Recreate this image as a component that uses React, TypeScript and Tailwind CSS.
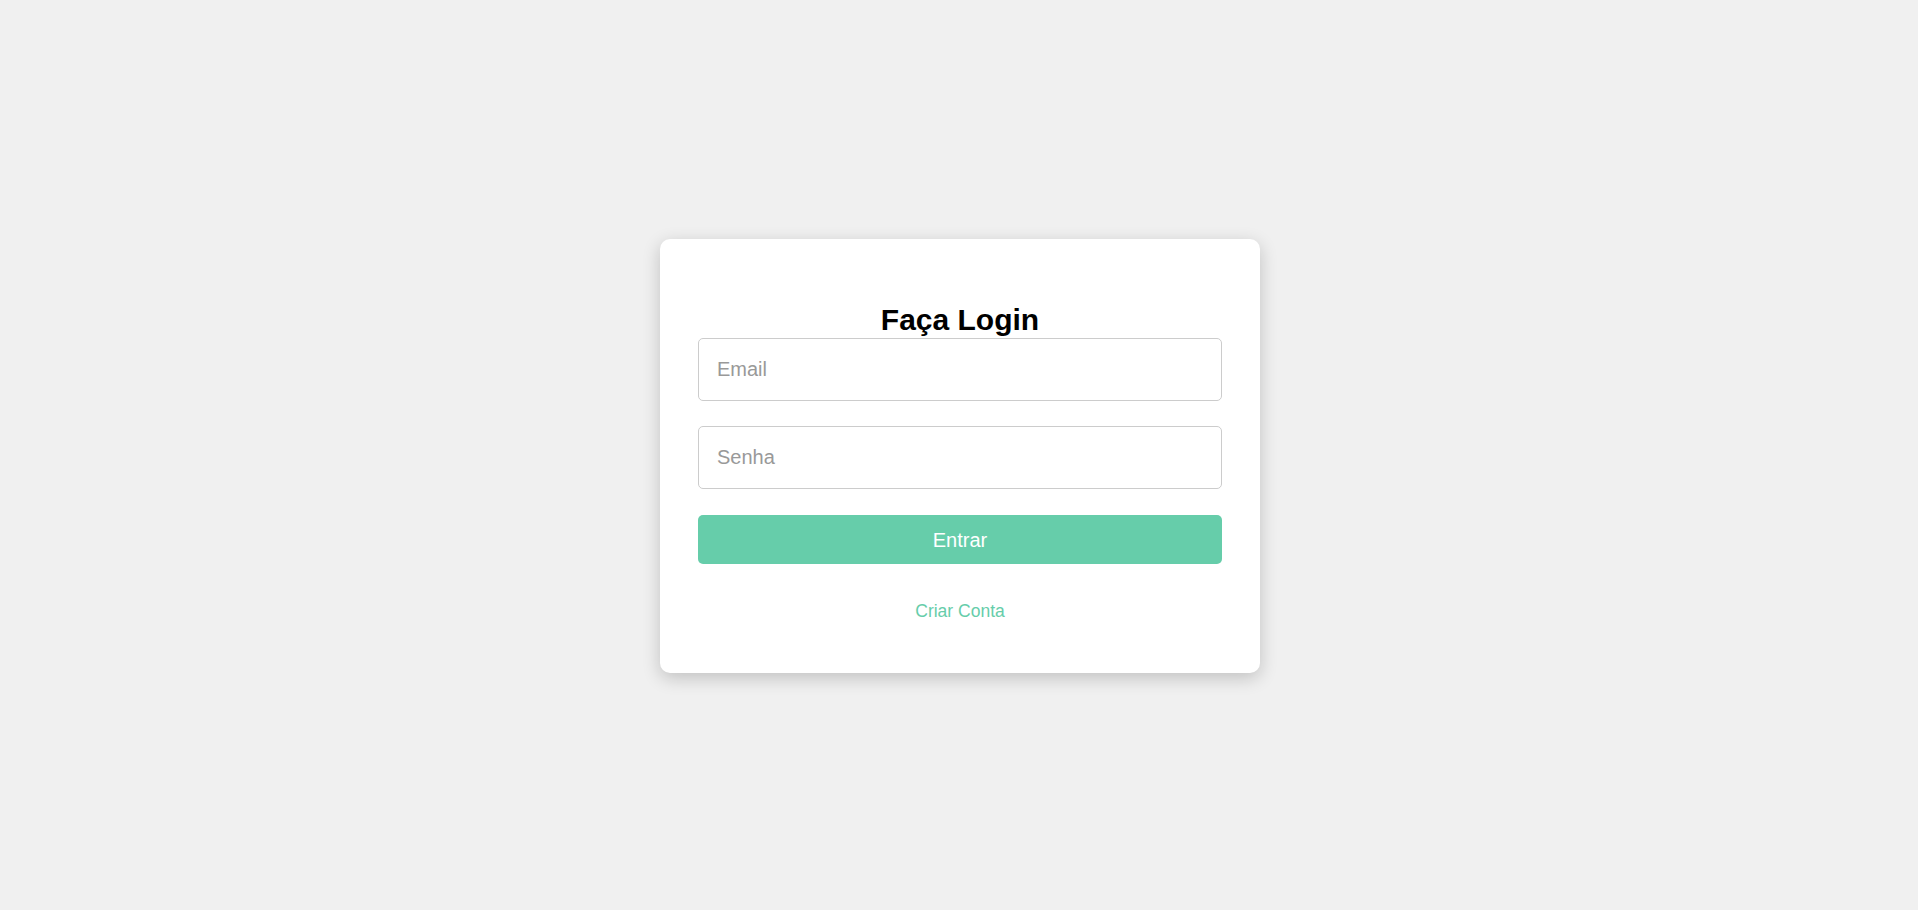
export default function App() {
  return (
    <div className="flex h-[910px] w-full items-center justify-center bg-[#f0f0f0] font-['Liberation_Sans',Arial,sans-serif]">
      <div className="mt-[2px] ml-[2px] w-[600px] rounded-[10px] bg-white px-[38px] pt-[63px] pb-[52px] shadow-[0_5px_18px_rgba(0,0,0,0.2)]">
        <h2 className="mb-px text-center text-[30px] leading-[35px] font-bold text-black">Faça Login</h2>
        <form className="flex flex-col" onSubmit={(e) => e.preventDefault()}>
          <input
            type="email"
            placeholder="Email"
            className="h-[63px] w-full rounded-[5px] border border-[#cccccc] px-[18px] text-[20px] text-black outline-none placeholder:text-[#999999]"
          />
          <input
            type="password"
            placeholder="Senha"
            className="mt-[25px] h-[63px] w-full rounded-[5px] border border-[#cccccc] px-[18px] text-[20px] text-black outline-none placeholder:text-[#999999]"
          />
          <button
            type="submit"
            className="mt-[26px] h-[49px] w-full rounded-[5px] bg-[#66cdaa] text-[20px] text-white"
          >
            Entrar
          </button>
        </form>
        <p className="mt-[37px] text-center text-[17.5px] leading-[20px]">
          <a href="#" className="text-[#66cdaa] no-underline">Criar Conta</a>
        </p>
      </div>
    </div>
  )
}
